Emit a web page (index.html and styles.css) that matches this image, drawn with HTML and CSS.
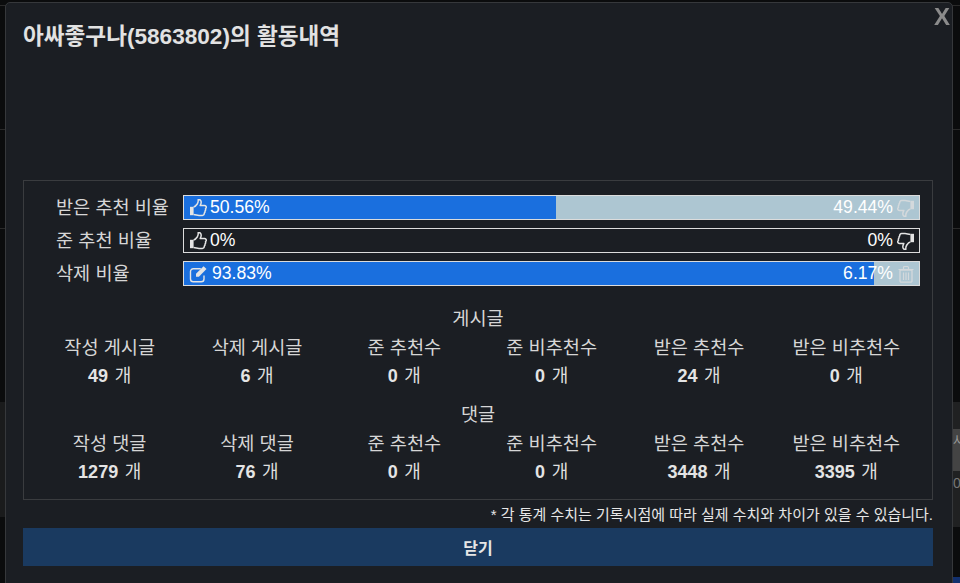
FILE: index.html
```html
<!DOCTYPE html>
<html lang="ko">
<head>
<meta charset="utf-8">
<title>활동내역</title>
<link rel="stylesheet" href="styles.css">
</head>
<body>
<div class="backdrop">
  <div class="bg-band bg-left"></div>
  <div class="bg-band bg-right"></div>
  <div class="bg-band bg-right-gray"><span>사</span></div>
  <div class="bg-zero">0</div>
  <div class="bg-line bg-line-a"></div>
  <div class="bg-line bg-line-b"></div>
  <div class="bg-line bg-line-c"></div>
  <div class="bg-blue"></div>
</div>
<main class="modal">
  <button class="close" type="button">X</button>
  <h1 class="title">아싸좋구나(5863802)의 활동내역</h1>
  <section class="panel">
    <div class="rates">
      <div class="rate">
        <div class="rate-label">받은 추천 비율</div>
        <div class="bar">
          <div class="fill" style="width:50.56%"></div>
          <div class="bar-text">
            <span class="side"><svg class="ico" viewBox="0 0 18 18"><use href="#up"/></svg>50.56%</span>
            <span class="side dim">49.44%<svg class="ico ico-r" viewBox="0 0 18 18"><use href="#down"/></svg></span>
          </div>
        </div>
      </div>
      <div class="rate">
        <div class="rate-label">준 추천 비율</div>
        <div class="bar bar-empty">
          <div class="bar-text">
            <span class="side"><svg class="ico" viewBox="0 0 18 18"><use href="#up"/></svg>0%</span>
            <span class="side">0%<svg class="ico ico-r" viewBox="0 0 18 18"><use href="#down"/></svg></span>
          </div>
        </div>
      </div>
      <div class="rate">
        <div class="rate-label">삭제 비율</div>
        <div class="bar">
          <div class="fill" style="width:93.83%"></div>
          <div class="bar-text">
            <span class="side"><svg class="ico ico-edit" viewBox="0 0 18 18"><use href="#edit"/></svg>93.83%</span>
            <span class="side dim">6.17%<svg class="ico ico-r" viewBox="0 0 18 18"><use href="#trash"/></svg></span>
          </div>
        </div>
      </div>
    </div>

    <div class="stats">
      <div class="stats-head">게시글</div>
      <div class="stats-grid">
        <div class="stat"><div>작성 게시글</div><div class="val"><b>49</b> 개</div></div>
        <div class="stat"><div>삭제 게시글</div><div class="val"><b>6</b> 개</div></div>
        <div class="stat"><div>준 추천수</div><div class="val"><b>0</b> 개</div></div>
        <div class="stat"><div>준 비추천수</div><div class="val"><b>0</b> 개</div></div>
        <div class="stat"><div>받은 추천수</div><div class="val"><b>24</b> 개</div></div>
        <div class="stat"><div>받은 비추천수</div><div class="val"><b>0</b> 개</div></div>
      </div>
    </div>
    <div class="stats">
      <div class="stats-head">댓글</div>
      <div class="stats-grid">
        <div class="stat"><div>작성 댓글</div><div class="val"><b>1279</b> 개</div></div>
        <div class="stat"><div>삭제 댓글</div><div class="val"><b>76</b> 개</div></div>
        <div class="stat"><div>준 추천수</div><div class="val"><b>0</b> 개</div></div>
        <div class="stat"><div>준 비추천수</div><div class="val"><b>0</b> 개</div></div>
        <div class="stat"><div>받은 추천수</div><div class="val"><b>3448</b> 개</div></div>
        <div class="stat"><div>받은 비추천수</div><div class="val"><b>3395</b> 개</div></div>
      </div>
    </div>
  </section>
  <p class="note">* 각 통계 수치는 기록시점에 따라 실제 수치와 차이가 있을 수 있습니다.</p>
  <button class="confirm" type="button">닫기</button>
</main>
<svg class="defs" width="0" height="0" aria-hidden="true">
  <defs>
    <g id="up">
      <path d="M1 7.800h3.600v8.400H1z" fill="currentColor"/>
      <path d="M4.600 8c1.700-.3 2.700-1.600 3.600-3 .6-1 1-1.700 1-3V.6c1.800-.3 3 .7 3 2.600 0 1.300-.5 2.300-1 3.400h4.300c1.300 0 2 1 1.700 2.100-.1.500-.4.800-.7 1.100.3.900.1 1.700-.5 2.200.2.900-.1 1.600-.7 2.100.1 1.600-.7 2.300-1.900 2.300H10c-1.900 0-3.200-.8-5.400-.9" fill="none" stroke="currentColor" stroke-width="1.500" stroke-linejoin="round"/>
    </g>
    <g id="down">
      <path d="M13.400 1.800H17v8.400h-3.600z" fill="currentColor"/>
      <path d="M13.400 10c-1.700.3-2.700 1.600-3.600 3-.6 1-1 1.700-1 3v1.400c-1.800.3-3-.7-3-2.600 0-1.300.5-2.300 1-3.400H2.500C1.200 11.400.5 10.400.8 9.300c.1-.5.4-.8.7-1.100-.3-.9-.1-1.700.5-2.200-.2-.9.1-1.600.7-2.100C2.600 2.300 3.400 1.600 4.600 1.600H8c1.900 0 3.200.8 5.400.9" fill="none" stroke="currentColor" stroke-width="1.500" stroke-linejoin="round"/>
    </g>
    <g id="edit">
      <path d="M15 10.500V14a2.800 2.800 0 0 1-2.800 2.800H4.300A2.800 2.800 0 0 1 1.500 14V6.500a2.800 2.800 0 0 1 2.800-2.800h7.500" fill="none" stroke="currentColor" stroke-width="1.400"/>
      <path d="M7 8.800 14.600 1.200l2.900 2.900-7.600 7.600H7z" fill="currentColor"/>
    </g>
    <g id="trash">
      <path d="M3 5h12v11a1.200 1.200 0 0 1-1.200 1.200H4.200A1.200 1.200 0 0 1 3 16z" fill="none" stroke="currentColor" stroke-width="1.300"/>
      <path d="M1.500 4.500h15M6.500 4.500V2.500a1 1 0 0 1 1-1h3a1 1 0 0 1 1 1v2M6.500 7.500v7.500M9 7.500v7.500M11.500 7.500v7.500" fill="none" stroke="currentColor" stroke-width="1.200"/>
    </g>
  </defs>
</svg>
</body>
</html>
```

FILE: styles.css
```css
* { box-sizing: border-box; }

html, body {
  margin: 0;
  height: 100%;
  overflow: hidden;
  background: #0b0c0d;
  font-family: "Liberation Sans", "Noto Sans CJK KR", sans-serif;
}

body {
  padding: 2px 7px 0 5px;
}

.backdrop {
  position: fixed;
  inset: 0;
  background: #0b0c0d;
}

.bg-band { position: absolute; }
.bg-left { left: 0; top: 402px; width: 5px; height: 115px; background: #1a1b1c; }
.bg-right { right: 0; top: 402px; width: 7px; height: 125px; background: #202122; }
.bg-right-gray {
  right: 0; top: 429px; width: 7px; height: 42px;
  background: #444;
  color: #999;
  font-size: 13px;
  line-height: 24px;
  overflow: hidden;
}
.bg-zero { position: absolute; right: 0; top: 475px; width: 7px; color: #777; font-size: 14px; line-height: 16px; overflow: hidden; }
.bg-line { position: absolute; height: 1px; background: #2a2a2a; left: 0; right: 0; }
.bg-line-a { top: 5px; }
.bg-line-b { top: 129px; }
.bg-line-c { top: 228px; }
.bg-blue { position: absolute; right: 0; top: 577px; width: 7px; height: 6px; background: #12306e; }

.modal {
  position: relative;
  height: 600px;
  padding: 0 19px 0 17px;
  background: #1b1e23;
  border: 1px solid #36383b;
  border-radius: 5px;
}

.close {
  position: absolute;
  top: 2px;
  right: 2px;
  padding: 0;
  border: 0;
  background: none;
  color: #8b8b8b;
  font: bold 24px/24px "Liberation Sans", sans-serif;
}

.title {
  margin: 0;
  padding-top: 19px;
  height: 177px;
  color: #e2e2e2;
  font-size: 22.6px;
  line-height: 30px;
  font-weight: bold;
}

.panel {
  height: 320px;
  padding: 14px 12px 0 0;
  border: 1px solid #3a3c3f;
  color: #d6d6d6;
}

.rates {
  display: flex;
  flex-direction: column;
  gap: 8px;
}

.rate {
  display: flex;
  align-items: center;
  height: 25px;
}

.rate-label {
  width: 159px;
  padding-left: 32px;
  font-size: 18.6px;
  line-height: 24px;
  color: #d6d6d6;
  white-space: nowrap;
}

.bar {
  position: relative;
  flex: 1;
  height: 25px;
  background: #adc6d2;
  border: 1px solid #dcdcdc;
}

.bar-empty { background: #1b1e23; }

.fill {
  height: 100%;
  background: #1a6fde;
}

.bar-text {
  position: absolute;
  inset: 0;
  display: flex;
  justify-content: space-between;
  align-items: center;
  padding: 0 4px 0 5px;
  color: #fff;
  font-size: 17.6px;
  line-height: 23px;
}

.side {
  display: flex;
  align-items: center;
  color: #fff;
}

.ico {
  width: 18px;
  height: 18px;
  margin-right: 3px;
  color: #e4e4e4;
}

.ico-edit { margin-right: 5px; }

.ico-r {
  margin-right: 0;
  margin-left: 4px;
}

.dim .ico { color: #d4d9dc; }

.stats {
  margin-left: 12px;
}

.stats-head {
  padding-top: 17px;
  text-align: center;
  font-size: 18.6px;
  line-height: 31px;
}

.stats + .stats .stats-head {
  padding-top: 10px;
  line-height: 30px;
}

.stats-grid {
  display: grid;
  grid-template-columns: repeat(6, 1fr);
  text-align: center;
  font-size: 18.6px;
  line-height: 28px;
}

.stat { white-space: nowrap; }

.val {
  color: #dedede;
  font-size: 18px;
  word-spacing: 1.5px;
}
.val b { color: #e4e4e4; }

.note {
  margin: 5px 0 0;
  text-align: right;
  color: #e6e6e6;
  font-size: 15px;
  line-height: 20px;
  white-space: nowrap;
}

.confirm {
  display: block;
  width: 100%;
  height: 38px;
  margin-top: 3px;
  border: 0;
  background: #1a3a60;
  color: #e6e6e6;
  font: bold 16px "Liberation Sans", "Noto Sans CJK KR", sans-serif;
}

.defs { position: absolute; }
```
